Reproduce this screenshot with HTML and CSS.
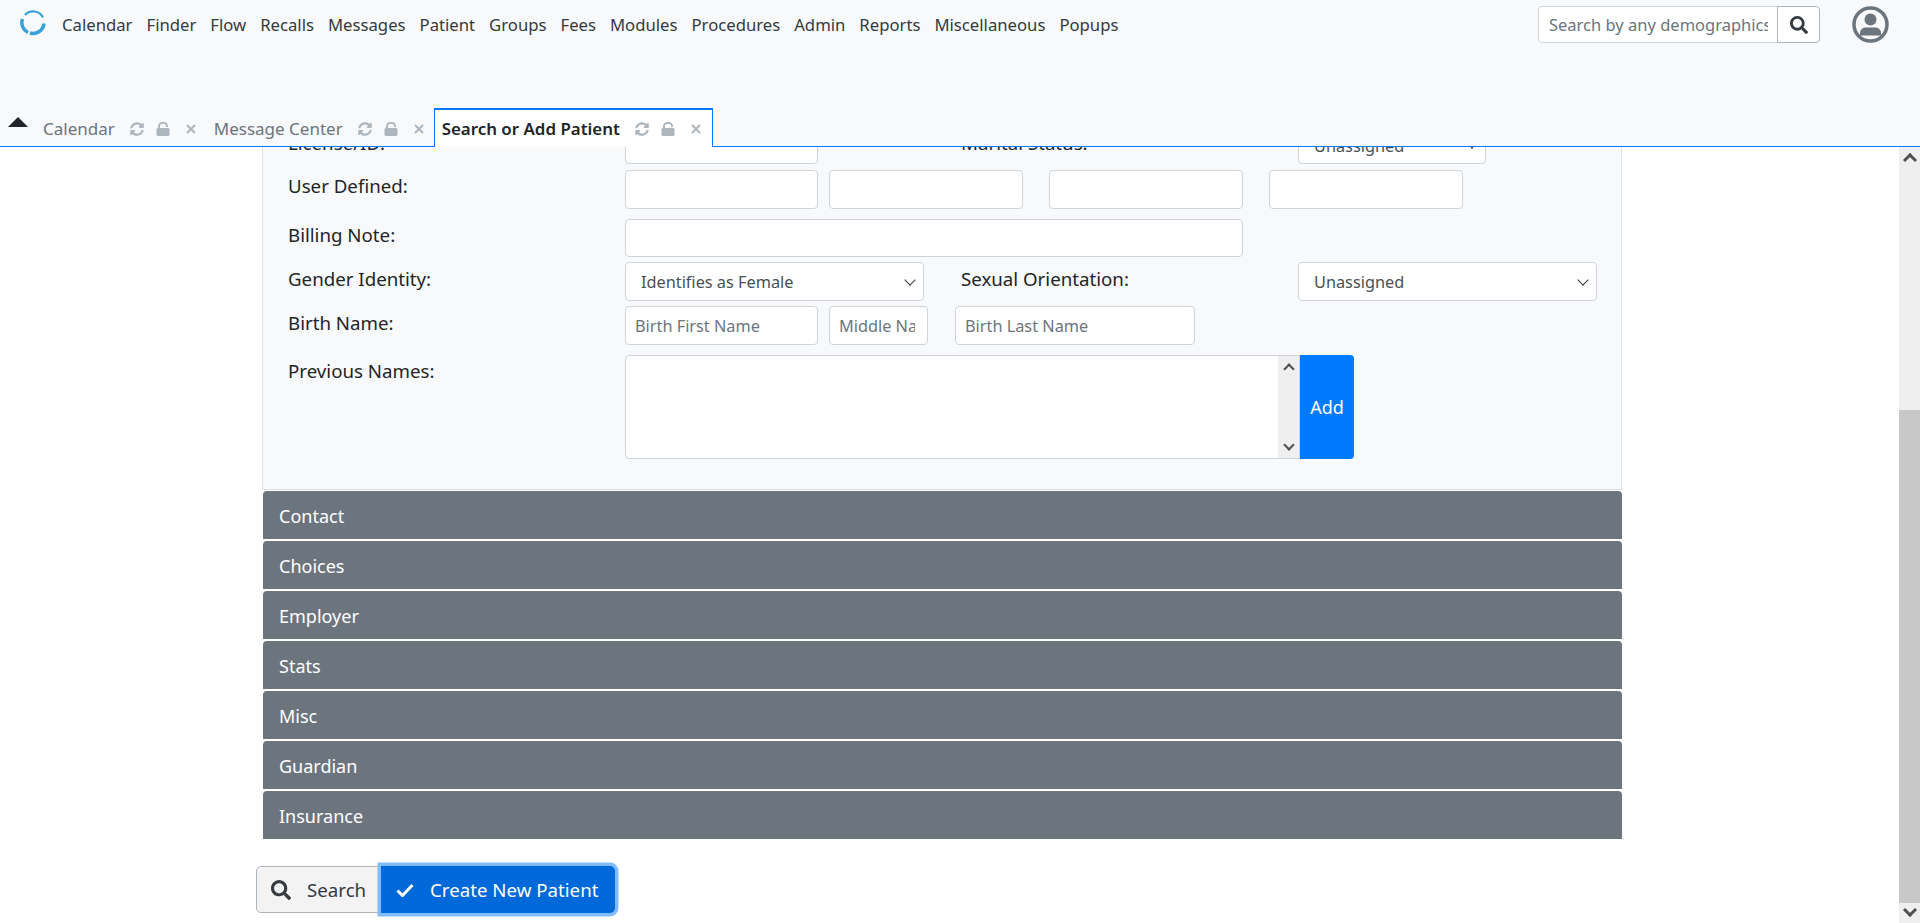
FILE: index.html
```html
<!DOCTYPE html>
<html>
<head>
  <meta charset="utf-8">
  <meta name="viewport" content="width=device-width">
  <title>Search or Add Patient</title>
  <link rel="stylesheet" href="styles.css">
</head>
<body>

  <svg class="defs" width="0" height="0">
    <symbol id="i-search" viewBox="0 0 512 512"><path d="M505 442.700L405.300 343c-4.500-4.500-10.600-7-17-7H372c27.600-35.300 44-79.700 44-128C416 93.100 322.900 0 208 0S0 93.100 0 208s93.100 208 208 208c48.300 0 92.700-16.400 128-44v16.300c0 6.400 2.500 12.500 7 17l99.700 99.700c9.400 9.400 24.600 9.400 33.900 0l28.300-28.300c9.400-9.400 9.400-24.600.1-34zM208 336c-70.700 0-128-57.200-128-128 0-70.700 57.200-128 128-128 70.700 0 128 57.200 128 128 0 70.700-57.200 128-128 128z"/></symbol>
    <symbol id="i-sync" viewBox="0 0 512 512"><path d="M370.720 133.280C339.458 104.008 298.888 87.962 255.848 88c-77.458.068-144.328 53.178-162.791 126.850-1.344 5.363-6.122 9.150-11.651 9.150H24.103c-7.498 0-13.194-6.807-11.807-14.176C33.933 94.924 134.813 8 256 8c66.448 0 126.791 26.136 171.315 68.685L463.030 40.970C478.149 25.851 504 36.559 504 57.941V192c0 13.255-10.745 24-24 24H345.941c-21.382 0-32.090-25.851-16.971-40.971l41.750-41.749zM32 296h134.059c21.382 0 32.090 25.851 16.971 40.971l-41.750 41.750c31.262 29.273 71.835 45.319 114.876 45.280 77.418-.07 144.315-53.144 162.787-126.849 1.344-5.363 6.122-9.150 11.651-9.150h57.304c7.498 0 13.194 6.807 11.807 14.176C478.067 417.076 377.187 504 256 504c-66.448 0-126.791-26.136-171.315-68.685L48.970 471.030C33.851 486.149 8 475.441 8 454.059V320c0-13.255 10.745-24 24-24z"/></symbol>
    <symbol id="i-lock" viewBox="0 0 14 14"><rect x="0.500" y="6" width="13" height="8" rx="1.500"/><path d="M3 7V4.200a4 3.400 0 0 1 8 0v.8" fill="none" stroke="currentColor" stroke-width="2"/></symbol>
    <symbol id="i-x" viewBox="0 0 10 10"><path d="M1 1l8 8M9 1L1 9" fill="none" stroke="currentColor" stroke-width="2"/></symbol>
  </svg>

  <header class="topbar">
    <nav class="mainnav">
      <svg class="logo" viewBox="0 0 26 26" width="26" height="26">
        <path stroke-width="2.200" d="M5 5A11 11 0 0 1 23 7.500"/>
        <path stroke-width="3.500" d="M2.500 9A11 11 0 0 0 8 22.500"/>
        <path stroke-width="3.500" d="M24 13.500A11 11 0 0 1 10 23"/>
      </svg>
      <a href="#">Calendar</a>
      <a href="#">Finder</a>
      <a href="#">Flow</a>
      <a href="#">Recalls</a>
      <a href="#">Messages</a>
      <a href="#">Patient</a>
      <a href="#">Groups</a>
      <a href="#">Fees</a>
      <a href="#">Modules</a>
      <a href="#">Procedures</a>
      <a href="#">Admin</a>
      <a href="#">Reports</a>
      <a href="#">Miscellaneous</a>
      <a href="#">Popups</a>
      <div class="navsearch">
        <input type="text" placeholder="Search by any demographics">
        <button><svg class="ico16"><use href="#i-search"/></svg></button>
      </div>
      <svg class="avatar" viewBox="0 0 37 37" width="37" height="37">
        <circle cx="18.500" cy="18.500" r="16.500" fill="none" stroke="#6c757d" stroke-width="3.500"/>
        <circle cx="18.500" cy="13.500" r="6"/>
        <path d="M8 29.500v-2.500c0-3.500 3-5.500 6-5.500h9c3 0 6 2 6 5.500v2.500z"/>
      </svg>
    </nav>
    <div class="tabs">
      <span class="caret"></span>
      <div class="tab">
        <span class="tabname">Calendar</span>
        <svg class="tabico"><use href="#i-sync"/></svg>
        <svg class="tabico"><use href="#i-lock"/></svg>
        <svg class="tabico small"><use href="#i-x"/></svg>
      </div>
      <div class="tab">
        <span class="tabname">Message Center</span>
        <svg class="tabico"><use href="#i-sync"/></svg>
        <svg class="tabico"><use href="#i-lock"/></svg>
        <svg class="tabico small"><use href="#i-x"/></svg>
      </div>
      <div class="tab active">
        <span class="tabname">Search or Add Patient</span>
        <svg class="tabico"><use href="#i-sync"/></svg>
        <svg class="tabico"><use href="#i-lock"/></svg>
        <svg class="tabico small"><use href="#i-x"/></svg>
      </div>
    </div>
  </header>

  <div class="page">
    <main class="content">
      <section class="panel">
        <div class="row first">
          <label>License/ID:</label>
          <input class="w193" type="text">
          <label class="side wide">Marital Status:</label>
          <div class="select w188">Unassigned</div>
        </div>
        <div class="row r6">
          <label class="lift">User Defined:</label>
          <input class="w193" type="text">
          <input class="w194 gap12" type="text">
          <input class="w194 gap26" type="text">
          <input class="w194 gap26" type="text">
        </div>
        <div class="row r10">
          <label class="lift">Billing Note:</label>
          <input class="w618 short" type="text">
        </div>
        <div class="row r5">
          <label>Gender Identity:</label>
          <div class="select w299">Identifies as Female</div>
          <label class="side">Sexual Orientation:</label>
          <div class="select w299">Unassigned</div>
        </div>
        <div class="row r5">
          <label>Birth Name:</label>
          <input class="w193" type="text" placeholder="Birth First Name">
          <input class="w99 gap12" type="text" placeholder="Middle Name">
          <input class="w240 gap27" type="text" placeholder="Birth Last Name">
        </div>
        <div class="row r10">
          <label class="lift">Previous Names:</label>
          <div class="names">
            <div class="minibar"><span class="chev"></span><span class="chev down"></span></div>
          </div>
          <button class="addbtn">Add</button>
        </div>
      </section>

      <div class="acc">Contact</div>
      <div class="acc">Choices</div>
      <div class="acc">Employer</div>
      <div class="acc">Stats</div>
      <div class="acc">Misc</div>
      <div class="acc">Guardian</div>
      <div class="acc">Insurance</div>

      <div class="actions">
        <button class="btn-search"><svg class="ico16"><use href="#i-search"/></svg>Search</button>
        <button class="btn-create">
          <svg class="check" viewBox="0 0 18 14" width="18" height="14"><path d="M1.500 7.500l5 5L16.500 2" fill="none" stroke="#fff" stroke-width="3"/></svg>
          Create New Patient
        </button>
      </div>
    </main>
    <aside class="scroll">
      <span class="chev big"></span>
      <div class="thumb"></div>
      <span class="chev big down"></span>
    </aside>
  </div>

</body>
</html>
```

FILE: styles.css
```css
* {
  box-sizing: border-box;
}
html, body {
  height: 100%;
}
body {
  margin: 0;
  overflow: hidden;
  display: flex;
  flex-direction: column;
  font-family: "Noto Sans", sans-serif;
  font-size: 16.700px;
  line-height: 24px;
  color: #212529;
  background: #fff;
}
.defs {
  position: absolute;
}
input, button {
  font: inherit;
}
input::placeholder {
  color: #6c757d;
  opacity: 1;
}

/* top bar */
.topbar {
  position: relative;
  z-index: 2;
  height: 147px;
  flex: none;
  display: flex;
  flex-direction: column;
  justify-content: space-between;
  background: #f8f9fa;
  border-bottom: 1px solid #007bff;
}
.mainnav {
  display: flex;
  align-items: center;
  padding: 6px 31px 0 20px;
}
.logo {
  fill: none;
  stroke: #35a2d9;
  margin: -4px 9px 0 0;
  flex: none;
}
.mainnav a {
  color: #343a40;
  text-decoration: none;
  margin: 0 7px;
  padding-top: 1px;
}
.navsearch {
  display: flex;
  margin-left: auto;
  width: 282px;
  height: 37px;
}
.navsearch input {
  flex: 1;
  min-width: 0;
  padding: 0 9px 0 10px;
  border: 1px solid #ced4da;
  border-radius: 4px 0 0 4px;
  background: #fff;
  outline: none;
  font-size: 16.500px;
}
.navsearch button {
  width: 43px;
  margin-left: -1px;
  border: 1px solid #adb5bd;
  border-radius: 0 4px 4px 0;
  background: #fff;
  display: flex;
  align-items: center;
  justify-content: center;
  color: #343a40;
}
.ico16 {
  width: 18px;
  height: 18px;
  fill: currentColor;
}
.avatar {
  margin-left: 32px;
  fill: #6c757d;
  flex: none;
}

/* tabs */
.tabs {
  display: flex;
  align-items: flex-end;
  height: 39px;
  margin-bottom: -1px;
  font-size: 17px;
}
.caret {
  width: 0;
  height: 0;
  margin: 0 7px 20px 8px;
  border: 10px solid transparent;
  border-top: 0;
  border-bottom: 10px solid #212529;
}
.tab {
  display: flex;
  align-items: center;
  height: 39px;
  padding: 3px 0 0 8px;
  margin-right: 9.500px;
  color: #6c757d;
}
.tab.active {
  margin: 0;
  width: 279px;
  background: #fff;
  color: #212529;
  border: 1px solid #007bff;
  border-top-width: 2px;
  border-bottom: 0;
  padding-top: 1px;
  padding-left: 7px;
}
.tab.active .tabname {
  font-weight: 600;
  font-size: 16.900px;
}
.tabico {
  flex: none;
  width: 14px;
  height: 14px;
  margin-left: 12px;
  fill: #adb5bd;
  color: #adb5bd;
}
.tabname + .tabico {
  margin-left: 15.500px;
}
.tabico.small {
  width: 10px;
  height: 10px;
  margin-left: 16px;
}

/* page body */
.page {
  flex: 1;
  min-height: 0;
  display: flex;
}
.content {
  flex: 1;
  min-width: 0;
  overflow: hidden;
  display: flex;
  flex-direction: column;
  justify-content: flex-end;
  padding: 0 277px 10px 263px;
}
.panel {
  flex: none;
  padding: 0 25px 30px;
  margin: 0 0 1px -1px;
  background: #f8f9fa;
  border: 1px solid #dee2e6;
  border-top: 0;
}
.row {
  display: flex;
  align-items: flex-start;
}
.r5 { margin-top: 5px; }
.r6 { margin-top: 6px; }
.r10 { margin-top: 10px; }
.row label {
  flex: none;
  width: 337px;
  padding-top: 5px;
  font-size: 18.700px;
}
.first label {
  padding-top: 6px;
}
.row label.lift {
  padding-top: 4px;
}
.row label.side {
  margin-left: 37px;
}
.row label.side.wide {
  margin-left: 143px;
}
.row input, .select {
  height: 39px;
  background: #fff;
  border: 1px solid #ced4da;
  border-radius: 4px;
  color: #495057;
  outline: none;
  flex: none;
  font-size: 16.300px;
}
.row input {
  padding: 0 12px 0 9px;
}
.row input.short {
  height: 38px;
}
.select {
  position: relative;
  display: flex;
  align-items: center;
  padding: 1px 0 0 15px;
}
.first .select {
  padding-top: 3px;
}
.select::after {
  content: "";
  position: absolute;
  right: 9px;
  top: 13px;
  width: 7px;
  height: 7px;
  border: solid #343a40;
  border-width: 0 1.500px 1.500px 0;
  transform: rotate(45deg);
}
.w99 { width: 99px; }
.w188 { width: 188px; }
.w193 { width: 193px; }
.w194 { width: 194px; }
.w240 { width: 240px; }
.w299 { width: 299px; }
.w618 { width: 618px; }
.gap12 { margin-left: 11px; }
.gap26 { margin-left: 26px; }
.gap27 { margin-left: 27px; }
.names {
  flex: none;
  width: 675px;
  height: 104px;
  background: #fff;
  border: 1px solid #ced4da;
  border-radius: 4px 0 0 4px;
  display: flex;
  justify-content: flex-end;
}
.minibar {
  width: 21px;
  background: #efefef;
  display: flex;
  flex-direction: column;
  justify-content: space-between;
  align-items: center;
  padding: 6px 0;
}
.chev {
  flex: none;
  width: 8px;
  height: 8px;
  margin-top: 3px;
  border: solid #505050;
  border-width: 2px 0 0 2px;
  transform: rotate(45deg);
}
.chev.down {
  margin: 0 0 3px;
  transform: rotate(225deg);
}
.addbtn {
  flex: none;
  width: 54px;
  height: 104px;
  padding: 0;
  border: 0;
  border-radius: 0 4px 4px 0;
  background: #007bff;
  color: #fff;
  font-size: 18px;
}

/* accordion headers */
.acc {
  flex: none;
  height: 48px;
  margin-bottom: 2px;
  padding: 12.500px 16px 0;
  background: #6c757d;
  color: #fff;
  font-size: 18px;
  border-radius: 4px 4px 0 0;
}
.acc:nth-last-child(2) {
  margin-bottom: 0;
}

/* buttons under the form */
.actions {
  flex: none;
  display: flex;
  height: 47px;
  margin: 27px 0 0 -7px;
}
.actions button {
  display: flex;
  align-items: center;
  height: 47px;
  padding-top: 1px;
  font-size: 18.700px;
}
.btn-search {
  width: 125px;
  padding-right: 0;
  padding-left: 14px;
  background: #f3f3f3;
  border: 1px solid #adb5bd;
  border-radius: 5px 0 0 5px;
  color: #343a40;
}
.btn-search .ico16 {
  width: 20px;
  height: 20px;
  margin-right: 16px;
}
.btn-create {
  position: relative;
  width: 234px;
  padding-right: 0;
  padding-left: 15px;
  background: #0069d9;
  border: 0;
  border-radius: 0 5px 5px 0;
  color: #fff;
  box-shadow: 0 0 0 3.500px #80bdff;
}
.check {
  margin-right: 16px;
}

/* page scrollbar */
.scroll {
  flex: none;
  width: 21px;
  background: #efefef;
  display: flex;
  flex-direction: column;
  align-items: center;
}
.chev.big {
  width: 10px;
  height: 10px;
  margin-top: 8px;
  border-width: 3px 0 0 3px;
}
.chev.big.down {
  margin: 0 0 8px;
}
.thumb {
  flex: none;
  width: 100%;
  height: 493px;
  margin: auto 0 2px;
  background: #c8c8c8;
}
```
